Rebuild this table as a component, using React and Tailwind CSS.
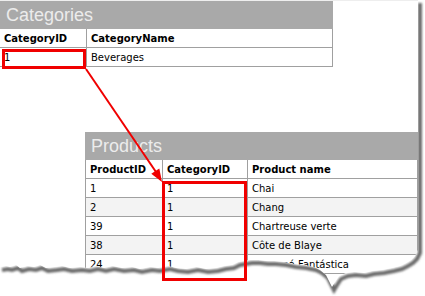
import React from 'react';

const categories = [{ id: '1', name: 'Beverages' }];

const products = [
  { id: '1', cat: '1', name: 'Chai' },
  { id: '2', cat: '1', name: 'Chang' },
  { id: '39', cat: '1', name: 'Chartreuse verte' },
  { id: '38', cat: '1', name: 'Côte de Blaye' },
  { id: '24', cat: '1', name: 'Guaraná Fantástica' },
];

// ragged bottom edge of the torn screenshot
const edge = [
  [0, 267], [6, 266], [10, 267], [16, 265], [20, 268], [27, 266], [34, 267], [40, 265],
  [46, 268], [55, 267], [62, 266], [70, 268], [80, 267], [88, 268], [96, 266], [104, 268],
  [112, 266], [122, 268], [132, 267], [140, 269], [150, 267], [158, 268], [168, 266],
  [176, 268], [186, 269], [196, 267], [206, 269], [216, 268], [224, 266], [232, 265],
  [238, 262], [244, 261], [250, 260], [258, 260], [266, 261], [274, 261], [284, 262],
  [294, 264], [304, 265], [314, 267], [320, 270], [326, 275], [329, 281], [332, 287],
  [335, 282], [339, 276], [346, 273], [354, 272], [364, 273], [372, 271], [382, 270],
  [392, 268], [400, 266], [406, 263], [411, 260], [415, 256], [418, 250], [418, 0],
];

const edgeLine = edge.map(([x, y]) => `${x},${y}`).join(' ');
const coverPoly = `${edgeLine} 425,0 425,296 0,296`;

function TitleBar({ title }) {
  return (
    <div className="flex h-[28px] items-center bg-[#a9a9a9] pl-[6px] font-['Liberation_Sans',sans-serif] text-[18px] text-[#ececec]">
      {title}
    </div>
  );
}

function Cell({ children, className = '', bold }) {
  return (
    <div
      className={`flex h-full items-center pl-[4px] ${bold ? 'font-bold' : ''} ${className}`}
    >
      {children}
    </div>
  );
}

export default function App() {
  return (
    <div className="relative h-[296px] w-[425px] overflow-hidden bg-white font-['DejaVu_Sans',sans-serif] text-[10px] text-black">
      {/* Paper */}
      <div className="w-[418px] border-t border-[#eeeeee]">
        {/* Categories */}
        <div className="w-[333px]">
          <TitleBar title="Categories" />
          <div className="flex h-[19px] border-b border-r border-[#a0a0a0]">
            <Cell bold className="w-[87px] border-r border-[#a0a0a0]">CategoryID</Cell>
            <Cell bold className="flex-1">CategoryName</Cell>
          </div>
          {categories.map((c) => (
            <div key={c.id} className="flex h-[19px] border-b border-r border-[#a0a0a0]">
              <Cell className="w-[87px] border-r border-[#a0a0a0]">{c.id}</Cell>
              <Cell className="flex-1">{c.name}</Cell>
            </div>
          ))}
        </div>

        {/* Products */}
        <div className="ml-[85px] mt-[65px] w-[333px]">
          <TitleBar title="Products" />
          <div className="flex h-[19px] border-b border-l border-r border-[#a0a0a0]">
            <Cell bold className="w-[77px] border-r border-[#a0a0a0]">ProductID</Cell>
            <Cell bold className="w-[85px] border-r border-[#a0a0a0]">CategoryID</Cell>
            <Cell bold className="flex-1">Product name</Cell>
          </div>
          {products.map((p, i) => (
            <div
              key={p.id}
              className={`flex h-[19px] border-b border-l border-r border-[#a0a0a0] ${
                i % 2 === 1 ? 'bg-[#f3f3f3]' : 'bg-white'
              }`}
            >
              <Cell className="w-[77px] border-r border-[#a0a0a0]">{p.id}</Cell>
              <Cell className="w-[85px] border-r border-[#a0a0a0]">{p.cat}</Cell>
              <Cell className="flex-1">{p.name}</Cell>
            </div>
          ))}
        </div>
      </div>

      {/* Torn edge + drop shadow */}
      <svg className="absolute left-0 top-0" width="425" height="296" viewBox="0 0 425 296">
        <defs>
          <clipPath id="below">
            <polygon points={coverPoly} />
          </clipPath>
          <filter id="soft" x="-10%" y="-10%" width="120%" height="120%">
            <feGaussianBlur stdDeviation="1.1" />
          </filter>
        </defs>
        <polygon points={coverPoly} fill="#ffffff" />
        <g clipPath="url(#below)">
          <polyline
            points={edgeLine}
            transform="translate(2 3)"
            fill="none"
            stroke="#6a6a6a"
            strokeWidth="4"
            filter="url(#soft)"
          />
        </g>
      </svg>

      {/* Highlight boxes */}
      <div className="absolute left-[2px] top-[49px] h-[20px] w-[84px] border-[3px] border-[#f00000]" />
      <div className="absolute left-[162px] top-[181px] h-[100px] w-[85px] border-[3px] border-[#f00000]" />

      {/* Arrow */}
      <svg className="absolute left-0 top-0" width="425" height="296" viewBox="0 0 425 296">
        <line x1="86" y1="69" x2="156" y2="172" stroke="#f00000" strokeWidth="2" />
        <polygon points="162,182 151.3,173.8 159.3,168.4" fill="#f00000" />
      </svg>
    </div>
  );
}
